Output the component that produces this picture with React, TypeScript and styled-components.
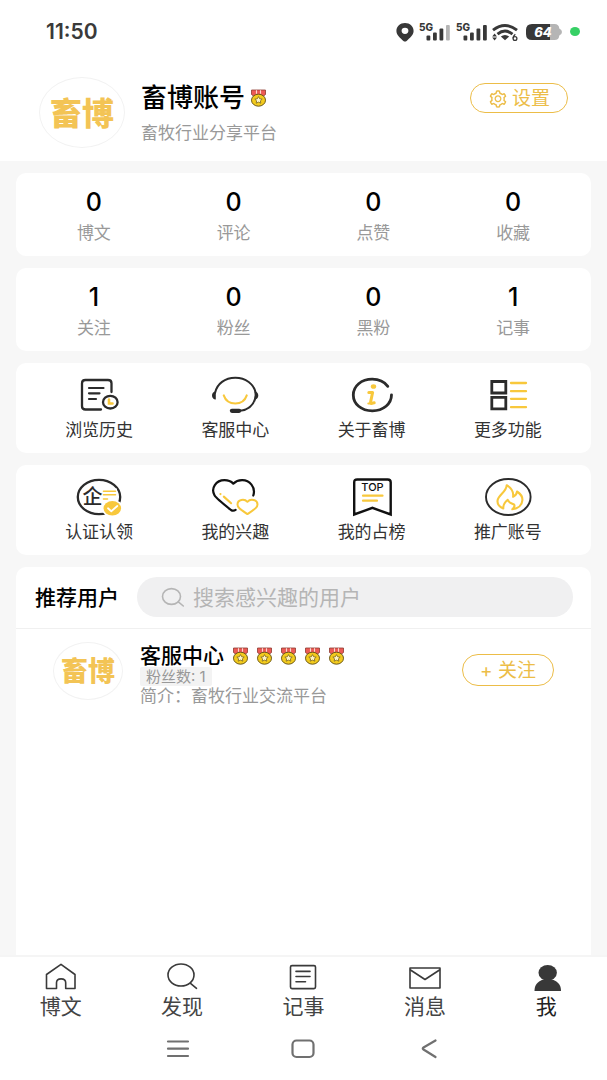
import React from "react";
import styled, { createGlobalStyle, css } from "styled-components";
import { AiOutlineSetting } from "react-icons/ai";

const GOLD = "#ecbd48";
const YELLOW = "#f8c83c";
const INK = "#2b2b2b";

const GlobalStyle = createGlobalStyle`
  * { box-sizing: border-box; }
  body { margin: 0; background: #f7f7f7; }
  body, button, input {
    font-family: Inter, "Noto Sans CJK SC", sans-serif;
  }
  button { padding: 0; border: 0; background: none; color: inherit; cursor: pointer; }
  svg { display: block; flex: none; }
`;

const Page = styled.div`
  display: flex;
  flex-direction: column;
  min-height: 100vh;
`;

const StatusBar = styled.div`
  display: flex;
  align-items: center;
  justify-content: space-between;
  height: 63px;
  padding: 0 27px 0 46px;
  background: #fff;
`;

const Clock = styled.time`
  font-size: 21px;
  line-height: 24px;
  font-weight: 600;
  color: #3a3a3a;
`;

const StatusIcons = styled.div`
  display: flex;
  align-items: center;
  gap: 4px;
`;

const BatteryWrap = styled.span`
  padding: 0 4px;
`;

const Profile = styled.header`
  display: flex;
  align-items: flex-start;
  gap: 16px;
  padding: 14px 39px 13px;
  background: #fff;
`;

const Avatar = styled.div<{ $small?: boolean }>`
  display: flex;
  align-items: center;
  justify-content: center;
  flex: none;
  width: ${(p) => (p.$small ? 70 : 86)}px;
  height: ${(p) => (p.$small ? 58 : 71)}px;
  padding-top: 2px;
  border: 1px solid #f2f2f2;
  border-radius: 50%;
  font-size: ${(p) => (p.$small ? 27 : 32)}px;
  line-height: 36px;
  font-weight: 900;
  color: #f3c455;
`;

const ProfileText = styled.div`
  flex: 1;
  min-width: 0;
`;

const ProfileName = styled.h1`
  display: flex;
  align-items: center;
  gap: 5px;
  margin: 0;
  font-size: 26px;
  line-height: 42px;
  font-weight: 500;
  color: #000;
`;

const ProfileBio = styled.p`
  margin: 0;
  font-size: 17px;
  line-height: 28px;
  color: #999;
`;

const PillButton = styled.button<{ $tall?: boolean }>`
  display: flex;
  align-items: center;
  justify-content: center;
  gap: 4px;
  flex: none;
  width: ${(p) => (p.$tall ? 92 : 98)}px;
  height: ${(p) => (p.$tall ? 32 : 30)}px;
  margin-top: ${(p) => (p.$tall ? 12 : 6)}px;
  padding-top: 2px;
  border: 1px solid ${GOLD};
  border-radius: 16px;
  font-size: 19px;
  line-height: 24px;
  color: ${GOLD};
`;

const Main = styled.main`
  display: flex;
  flex-direction: column;
  flex: 1;
  gap: 12px;
  padding: 12px 16px 0;
`;

const cardLook = css`
  background: #fff;
  border-radius: 10px;
`;

const StatCard = styled.section`
  ${cardLook}
  display: grid;
  grid-template-columns: repeat(4, 1fr);
  padding: 14px 8px 12px;
`;

const Stat = styled.button`
  display: flex;
  flex-direction: column;
  align-items: center;
  gap: 5px;
`;

const StatValue = styled.strong`
  font-size: 25px;
  line-height: 30px;
  font-weight: 500;
  color: #000;
`;

const StatLabel = styled.span`
  font-size: 17px;
  line-height: 22px;
  color: #999;
`;

const MenuCard = styled.nav`
  ${cardLook}
  display: grid;
  grid-template-columns: repeat(4, 1fr);
  padding: 12px 15px;
`;

const MenuItem = styled.button`
  display: flex;
  flex-direction: column;
  align-items: center;
  gap: 2px;
  font-size: 17px;
  line-height: 22px;
  color: #333;
`;

const UsersCard = styled.section`
  flex: 1;
  background: #fff;
  border-radius: 10px 10px 0 0;
`;

const UsersHead = styled.div`
  display: flex;
  align-items: center;
  gap: 18px;
  padding: 10px 18px 11px 19px;
  border-bottom: 1px solid #f0f0f0;
`;

const UsersTitle = styled.h2`
  margin: 0;
  padding-top: 2px;
  flex: none;
  font-size: 21px;
  line-height: 26px;
  font-weight: 500;
  color: #000;
`;

const SearchBox = styled.label`
  display: flex;
  align-items: center;
  gap: 8px;
  flex: 1;
  min-width: 0;
  height: 40px;
  padding: 0 24px;
  border-radius: 20px;
  background: #f0f0f1;
`;

const SearchInput = styled.input`
  flex: 1;
  min-width: 0;
  padding: 2px 0 0;
  border: 0;
  outline: 0;
  background: none;
  font-size: 21px;
  line-height: 28px;
  color: #333;
  &::placeholder { color: #b5b5b5; opacity: 1; }
`;

const UserRow = styled.article`
  display: flex;
  align-items: flex-start;
  gap: 17px;
  padding: 13px 37px;
`;

const UserText = styled.div`
  flex: 1;
  min-width: 0;
  padding-top: 2px;
`;

const UserName = styled.h3`
  display: flex;
  align-items: center;
  gap: 8px;
  margin: 0;
  font-size: 21px;
  line-height: 23px;
  font-weight: 500;
  color: #000;
`;

const Medals = styled.span`
  display: flex;
  gap: 7px;
`;

const FansTag = styled.span`
  display: block;
  width: fit-content;
  padding: 0 6px;
  border-radius: 2px;
  background: #f3f3f3;
  font-size: 15px;
  line-height: 19px;
  color: #999;
`;

const UserBio = styled.p`
  margin: 0;
  font-size: 17px;
  line-height: 20px;
  color: #999;
`;

const TabBar = styled.nav`
  display: grid;
  grid-template-columns: repeat(5, 1fr);
  padding-top: 5px;
  border-top: 2px solid #f5f5f5;
  background: #fff;
`;

const Tab = styled.button<{ $active?: boolean }>`
  display: flex;
  flex-direction: column;
  align-items: center;
  gap: 2px;
  font-size: 21px;
  line-height: 26px;
  color: ${(p) => (p.$active ? "#222" : "#444")};
`;

const SystemBar = styled.div`
  display: grid;
  grid-template-columns: repeat(3, 1fr);
  height: 60px;
  padding: 0 19% 2px;
  background: #fff;
`;

const SystemButton = styled.button`
  display: flex;
  align-items: center;
  justify-content: center;
`;

/* ---- drawings ---- */

const Medal = () => (
  <svg width="17" height="18" viewBox="0 0 17 18" aria-hidden="true">
    <path d="M1.5 1h14v4.5l-2 1.5h-10l-2-1.5z" fill="#ec5a55" stroke="#8d3a30" strokeWidth=".8" />
    <path d="M6.5 1.3v3.4M10.5 1.3v3.4" stroke="#fbd9d0" strokeWidth="1.1" />
    <ellipse cx="8.5" cy="11.2" rx="7" ry="6" fill="#f3cb1d" stroke="#6d5a1a" strokeWidth="1" />
    <path
      d="M8.5 7.6l1.2 2.2 2.5.3-1.8 1.7.4 2.4-2.3-1.1-2.3 1.1.4-2.4-1.8-1.7 2.5-.3z"
      fill="#fff6c8"
      stroke="#7a641c"
      strokeWidth=".8"
    />
  </svg>
);

const Pin = () => (
  <svg width="18" height="20" viewBox="0 0 18 20" aria-hidden="true">
    <path
      d="M9 .9c-4.9 0-8.6 3.5-8.6 8 0 4.4 4.2 7.2 7 10 .9.9 2.3.9 3.2 0 2.8-2.8 7-5.6 7-10 0-4.5-3.7-8-8.6-8zm0 4.8a3.4 3.1 0 1 1 0 6.2 3.4 3.1 0 0 1 0-6.2z"
      fill="#383838"
      fillRule="evenodd"
    />
  </svg>
);

const Signal = ({ bars }: { bars: number }) => (
  <svg width="33" height="22" viewBox="0 -1 33 22" aria-hidden="true">
    <text x="1" y="9" fontFamily="Inter, sans-serif" fontSize="10" fontWeight="800" fill="#383838">
      5G
    </text>
    {[
      [8.5, 13.5],
      [15, 10.5],
      [21.5, 6.5],
      [28, 3],
    ].map(([x, y], i) => (
      <rect key={x} x={x} y={y} width="3.8" height={18.5 - y} rx="1" fill={i < bars ? "#383838" : "#b5b5b5"} />
    ))}
  </svg>
);

const Wifi = () => (
  <svg width="26" height="20" viewBox="0 0 26 20" aria-hidden="true">
    <g fill="none" stroke="#383838" strokeWidth="2.9">
      <path d="M1 8.2Q13-1.2 25 8.2" />
      <path d="M5.5 12.2Q13 6 20.5 12.2" />
    </g>
    <path d="M8.8 14.5Q13 11.4 17.2 14.5L13 18.3z" fill="#383838" />
    <path d="M2.6 11.5l2.4 3H.2zM2.6 18.6l2.4-3H.2z" fill="#383838" />
    <path d="M23.3 12.2Q21 14.2 21 16.3" fill="none" stroke="#383838" strokeWidth="1.3" />
    <circle cx="23" cy="16.5" r="1.9" fill="none" stroke="#383838" strokeWidth="1.3" />
  </svg>
);

const Battery = () => (
  <svg width="36" height="16" viewBox="0 0 36 16" role="img" aria-label="64%">
    <path d="M24 0h4.5q4.500 0 4.800 4.500Q36 5.500 36 8t-2.700 3.500Q33 16 28.500 16H24z" fill="#b5b5b5" />
    <path d="M6 0h18v16H6q-6 0-6-6V6q0-6 6-6z" fill="#383838" />
    <text x="17" y="13" textAnchor="middle" fontFamily="Inter, sans-serif" fontSize="13" fontWeight="800" fontStyle="italic" fill="#fff">
      64
    </text>
  </svg>
);

const GreenDot = () => (
  <svg width="10" height="10" viewBox="0 0 10 10" aria-hidden="true">
    <ellipse cx="5" cy="4.5" rx="5" ry="4.5" fill="#36d065" />
  </svg>
);

const MenuIcon = ({ children }: { children: React.ReactNode }) => (
  <svg width="48" height="42" viewBox="0 0 48 42" fill="none" strokeLinecap="round" strokeLinejoin="round" aria-hidden="true">
    {children}
  </svg>
);

const HistoryIcon = () => (
  <MenuIcon>
    <path d="M36.5 17V8.2Q36.5 5 33 5H10.5Q7 5 7 8.2v23q0 3.3 3.5 3.3H26" stroke={INK} strokeWidth="2.3" />
    <path d="M14 13h14.5M14 18.3h10.5M14 24h7" stroke={INK} strokeWidth="2.2" />
    <ellipse cx="35.3" cy="27.2" rx="7.3" ry="6.3" stroke={INK} strokeWidth="2.3" />
    <path d="M34 24.5v4h3.5" stroke={YELLOW} strokeWidth="2.6" strokeLinejoin="miter" />
  </MenuIcon>
);

const ServiceIcon = () => (
  <MenuIcon>
    <path d="M4 18C6 8.5 14 2.8 24.3 2.8S43 9 44.7 18" stroke={INK} strokeWidth="2" />
    <path d="M44.7 21.5C43 29.5 38.5 35 29 35.7" stroke={INK} strokeWidth="2" />
    <path d="M4.8 16.5v8C2.3 24.5 1 22.8 1 20.5s1.3-4 3.8-4zM43.6 16.5v8c2.4 0 3.7-1.7 3.7-4s-1.3-4-3.7-4z" fill={INK} />
    <rect x="18.8" y="33.7" width="11.5" height="4.2" rx="2.1" fill={INK} />
    <path d="M12.8 20.5C14.5 25.5 19 28.5 24.3 28.5S34 25.5 35.7 20.5" stroke={YELLOW} strokeWidth="2.2" />
  </MenuIcon>
);

const AboutIcon = () => (
  <MenuIcon>
    <path d="M39.8 11.3C36.5 7 30.8 4.2 24.3 4.2 13.3 4.2 5.3 11 5.3 20S13.3 35.8 24.3 35.8 43.5 29 43.5 19.8" stroke={INK} strokeWidth="2.8" />
    <ellipse cx="25.5" cy="11.5" rx="2.7" ry="2.3" fill={YELLOW} />
    <path d="M20.8 17.500h3.800l-2 9.500q-.2 1.500 1.100 1.400l2.500-.6" stroke={YELLOW} strokeWidth="3" />
    <path d="M20.300 28.500h3.500" stroke={YELLOW} strokeWidth="2" />
  </MenuIcon>
);

const MoreIcon = () => (
  <MenuIcon>
    <path d="M7.800 6.500h14v11.500h-14zM7.800 22.300h14v11.500h-14z" stroke={INK} strokeWidth="2.800" strokeLinejoin="miter" />
    <path d="M27 8h15M27 16.200h15M27 23.800h15M27 32.200h15" stroke={YELLOW} strokeWidth="2.300" />
  </MenuIcon>
);

const CertifyIcon = () => (
  <MenuIcon>
    <ellipse cx="24" cy="20" rx="21.200" ry="17.200" stroke={INK} strokeWidth="2.300" />
    <path d="M27.500 11.500H42v13H27.500z" fill="#fff" />
    <text x="17.500" y="27" textAnchor="middle" fontFamily="'Noto Sans CJK SC', sans-serif" fontSize="20" fontWeight="500" fill={INK}>
      企
    </text>
    <path d="M28.500 14.200h12M28.500 17.800h12M28.500 22h4" stroke={YELLOW} strokeWidth="1.600" />
    <ellipse cx="37.300" cy="31.300" rx="10.600" ry="8.800" fill="#fff" />
    <ellipse cx="37.300" cy="31.300" rx="8.800" ry="7.300" fill={YELLOW} />
    <path d="M33 31.300l3.300 2.900 6-5.200" stroke="#fff" strokeWidth="1.800" />
  </MenuIcon>
);

const InterestIcon = () => (
  <MenuIcon>
    <path
      d="M42.300 18.500C45 10 38.500 3 31 3.200 27.500 3.300 24.500 4.500 22.300 6.600 20 4.300 17 3.200 13.500 3.200 5 3.300-.5 11 3.500 18.300 5 21 10 25.200 20 33q2.300 1.500 4.600-.2"
      stroke="#111"
      strokeWidth="2.200"
    />
    <path d="M9.400 17.100h.1M12.800 19.600l7.300 6.600" stroke={YELLOW} strokeWidth="2.100" />
    <path
      d="M36.400 24.800C33.500 21.500 26.500 22.300 26.500 27.500c0 2.800 1.700 4 9.900 9.600 8.200-5.600 10.100-6.800 10.100-9.600 0-5.200-7.200-6-10.100-2.700z"
      stroke={YELLOW}
      strokeWidth="2"
    />
  </MenuIcon>
);

const TopIcon = () => (
  <MenuIcon>
    <path d="M6.200 37.500V5.200Q6.200 2.500 9.200 2.500h30.500q3 0 3 2.700v32.300L24.400 30.900z" stroke="#111" strokeWidth="2.400" strokeLinejoin="miter" />
    <text x="24.500" y="14.200" textAnchor="middle" fontFamily="Inter, sans-serif" fontSize="11" fontWeight="500" fill="#111">
      TOP
    </text>
    <path d="M15 18.700h19.500M15 23.700h14" stroke={YELLOW} strokeWidth="2.200" />
  </MenuIcon>
);

const PromoteIcon = () => (
  <MenuIcon>
    <ellipse cx="24.300" cy="20" rx="22.300" ry="18" stroke={INK} strokeWidth="1.900" />
    <path
      d="M19.300 31.500C15.500 30 13.300 27 13.500 23.800 14 18 22.500 15 22.700 8.200c4.300 2.600 7.100 6.300 6.400 11.600 2.200-1 3.700-2.800 3.900-5.300 3.600 2.300 5.600 5.300 5.400 8.600-.3 5-4.200 8.600-10.100 9.200 2.300-2 2.700-3.500 1.700-4.800-2.300-1-5.500-1.700-6.300-4.800-2.700 2.300-4.800 5-4.400 8.800z"
      stroke={YELLOW}
      strokeWidth="2.100"
    />
  </MenuIcon>
);

const SearchGlyph = () => (
  <svg width="24" height="22" viewBox="0 0 24 22" fill="none" stroke="#b5b5b5" strokeWidth="1.600" strokeLinecap="round" aria-hidden="true">
    <ellipse cx="10.500" cy="10.500" rx="9" ry="7.900" />
    <path d="M17.300 15.800l5 4.200" />
  </svg>
);

const TabIcon = ({ children }: { children: React.ReactNode }) => (
  <svg width="32" height="30" viewBox="0 0 32 30" fill="none" stroke="#3a3a3a" strokeWidth="1.600" strokeLinecap="round" strokeLinejoin="round" aria-hidden="true">
    {children}
  </svg>
);

const SystemIcon = ({ children }: { children: React.ReactNode }) => (
  <svg width="24" height="20" viewBox="0 0 24 20" fill="none" stroke="#707070" strokeWidth="2.200" strokeLinecap="round" strokeLinejoin="round" aria-hidden="true">
    {children}
  </svg>
);

/* ---- content ---- */

const stats = [
  [
    ["0", "博文"],
    ["0", "评论"],
    ["0", "点赞"],
    ["0", "收藏"],
  ],
  [
    ["1", "关注"],
    ["0", "粉丝"],
    ["0", "黑粉"],
    ["1", "记事"],
  ],
];

const menus: { label: string; Icon: () => React.JSX.Element }[][] = [
  [
    { label: "浏览历史", Icon: HistoryIcon },
    { label: "客服中心", Icon: ServiceIcon },
    { label: "关于畜博", Icon: AboutIcon },
    { label: "更多功能", Icon: MoreIcon },
  ],
  [
    { label: "认证认领", Icon: CertifyIcon },
    { label: "我的兴趣", Icon: InterestIcon },
    { label: "我的占榜", Icon: TopIcon },
    { label: "推广账号", Icon: PromoteIcon },
  ],
];

const tabs = [
  { label: "博文", icon: <path d="M1.500 26.500v-14L16 2.300l14 10.200v14h-9.300v-5.700c0-5.200-9.200-5.200-9.200 0v5.700z" /> },
  {
    label: "发现",
    icon: (
      <>
        <ellipse cx="15" cy="13" rx="13" ry="11" />
        <path d="M24.500 21.300l6 5" />
      </>
    ),
  },
  {
    label: "记事",
    icon: (
      <>
        <rect x="3.500" y="3.600" width="25" height="23" rx="1.500" />
        <path d="M9 9.400h14M9 14.500h14M9 19.700h9.500" />
      </>
    ),
  },
  {
    label: "消息",
    icon: (
      <>
        <rect x="1" y="6" width="30" height="20" />
        <path d="M1.500 8L16 17.500 30.500 8" />
      </>
    ),
  },
  {
    label: "我",
    active: true,
    icon: (
      <g fill="#383838" stroke="none">
        <ellipse cx="17.700" cy="10.800" rx="9.200" ry="7.800" />
        <path d="M4.500 29c0-6 2.500-9 8.500-11.500h9.500C28.500 20 31 23 31 29z" />
      </g>
    ),
  },
];

const systemButtons = [
  { label: "最近任务", icon: <path d="M2 2.500h20M2 9.700h20M2 17h20" /> },
  { label: "主屏幕", icon: <rect x="1.500" y="1.500" width="21" height="16.500" rx="4" /> },
  { label: "返回", icon: <path d="M18.500 1.500L6.500 8.500q-1.500 1 0 2l12 7.500" /> },
];

export default function App() {
  return (
    <Page>
      <GlobalStyle />
      <StatusBar>
        <Clock>11:50</Clock>
        <StatusIcons>
          <Pin />
          <Signal bars={3} />
          <Signal bars={4} />
          <Wifi />
          <BatteryWrap>
            <Battery />
          </BatteryWrap>
          <GreenDot />
        </StatusIcons>
      </StatusBar>

      <Profile>
        <Avatar>畜博</Avatar>
        <ProfileText>
          <ProfileName>
            畜博账号
            <Medal />
          </ProfileName>
          <ProfileBio>畜牧行业分享平台</ProfileBio>
        </ProfileText>
        <PillButton type="button">
          <AiOutlineSetting size={20} />
          设置
        </PillButton>
      </Profile>

      <Main>
        {stats.map((group, i) => (
          <StatCard key={i}>
            {group.map(([value, label]) => (
              <Stat key={label} type="button">
                <StatValue>{value}</StatValue>
                <StatLabel>{label}</StatLabel>
              </Stat>
            ))}
          </StatCard>
        ))}

        {menus.map((group, i) => (
          <MenuCard key={i}>
            {group.map(({ label, Icon }) => (
              <MenuItem key={label} type="button">
                <Icon />
                {label}
              </MenuItem>
            ))}
          </MenuCard>
        ))}

        <UsersCard>
          <UsersHead>
            <UsersTitle>推荐用户</UsersTitle>
            <SearchBox>
              <SearchGlyph />
              <SearchInput type="text" aria-label="搜索用户" placeholder="搜索感兴趣的用户" />
            </SearchBox>
          </UsersHead>
          <UserRow>
            <Avatar $small>畜博</Avatar>
            <UserText>
              <UserName>
                客服中心
                <Medals>
                  {[0, 1, 2, 3, 4].map((n) => (
                    <Medal key={n} />
                  ))}
                </Medals>
              </UserName>
              <FansTag>粉丝数: 1</FansTag>
              <UserBio>简介：畜牧行业交流平台</UserBio>
            </UserText>
            <PillButton type="button" $tall>
              + 关注
            </PillButton>
          </UserRow>
        </UsersCard>
      </Main>

      <TabBar>
        {tabs.map((tab) => (
          <Tab key={tab.label} type="button" $active={tab.active}>
            <TabIcon>{tab.icon}</TabIcon>
            {tab.label}
          </Tab>
        ))}
      </TabBar>
      <SystemBar>
        {systemButtons.map((button) => (
          <SystemButton key={button.label} type="button" aria-label={button.label}>
            <SystemIcon>{button.icon}</SystemIcon>
          </SystemButton>
        ))}
      </SystemBar>
    </Page>
  );
}
